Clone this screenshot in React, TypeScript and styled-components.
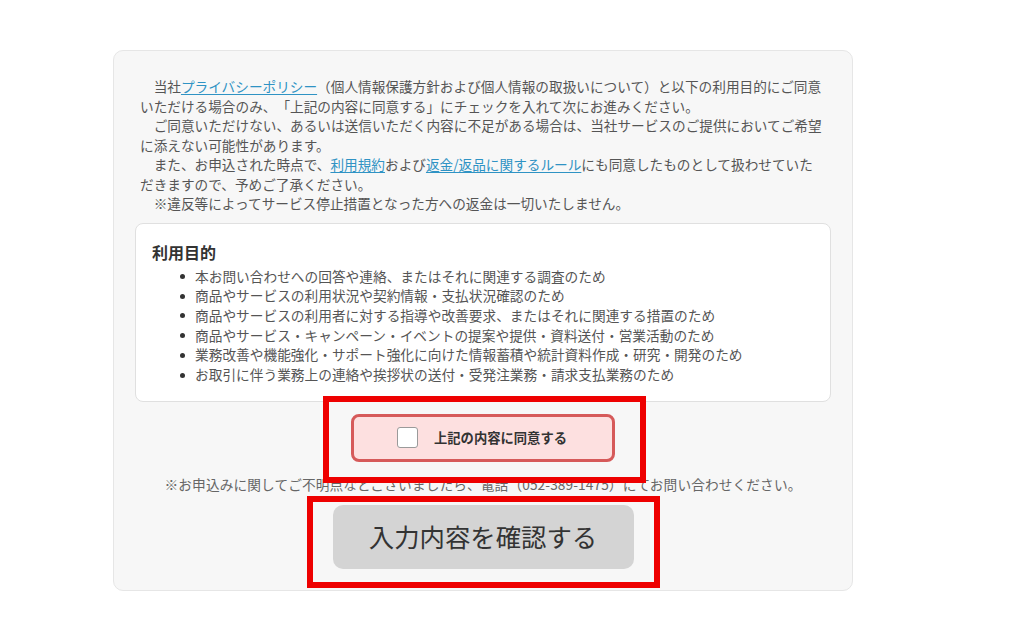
import React from "react";
import styled, { createGlobalStyle } from "styled-components";

const Global = createGlobalStyle`
  html, body { margin: 0; padding: 0; background: #ffffff; }
  body {
    font-family: "Noto Sans CJK JP", "Noto Sans", sans-serif;
    color: #555;
    text-spacing-trim: space-all;
  }
  * { box-sizing: border-box; }
`;

const Page = styled.div`
  padding: 50px 0 40px 113px;
`;

const Card = styled.section`
  width: 740px;
  background: #f7f7f7;
  border: 1px solid #e6e6e6;
  border-radius: 10px;
  padding: 26px 0 21px 0;
  display: flex;
  flex-direction: column;
  align-items: stretch;
`;

const Intro = styled.div`
  margin: 0 0 0 26px;
  width: 690px;
  font-size: 13.65px;
  line-height: 19.5px;
  color: #555;
  white-space: nowrap;
`;

const Line = styled.p`
  margin: 0;
`;

const Link = styled.a`
  color: #2f93c4;
  text-decoration: underline;
  text-underline-offset: 2px;
`;

const Purpose = styled.div`
  margin: 9px 21px 0 21px;
  background: #ffffff;
  border: 1px solid #e0e0e0;
  border-radius: 8px;
  padding: 16px 16px 16px 16px;
`;

const PurposeTitle = styled.h3`
  margin: 0 0 3px 0;
  font-size: 16px;
  line-height: 24px;
  font-weight: 700;
  color: #333;
`;

const List = styled.ul`
  list-style: none;
  margin: 0;
  padding: 0 0 0 43px;
`;

const Item = styled.li`
  position: relative;
  font-size: 13.7px;
  line-height: 19.7px;
  color: #555;
  &::before {
    content: "";
    position: absolute;
    left: -15px;
    top: 7.5px;
    width: 5px;
    height: 5px;
    border-radius: 50%;
    background: #333;
  }
`;

const Annotated = styled.div<{ $t: number; $r: number; $b: number; $l: number }>`
  position: relative;
  align-self: center;
  &::after {
    content: "";
    position: absolute;
    top: ${(p) => p.$t}px;
    right: ${(p) => p.$r}px;
    bottom: ${(p) => p.$b}px;
    left: ${(p) => p.$l}px;
    border: 6px solid #ee0000;
    pointer-events: none;
    z-index: 2;
  }
`;

const AgreeBox = styled.label`
  width: 264px;
  height: 48px;
  background: #fde0e0;
  border: 3px solid #d65a5a;
  border-radius: 8px;
  display: flex;
  align-items: center;
  justify-content: center;
  gap: 16px;
  cursor: pointer;
`;

const Check = styled.span`
  width: 21px;
  height: 21px;
  background: #fff;
  border: 1px solid #9a9a9a;
  border-radius: 3px;
  margin-left: -2px;
`;

const AgreeLabel = styled.span`
  font-size: 13.3px;
  font-weight: 700;
  color: #333;
`;

const Note = styled.p`
  margin: 12px 0 0 0;
  text-align: center;
  font-size: 13.7px;
  line-height: 20px;
  letter-spacing: 0.1px;
  color: #666;
  position: relative;
  z-index: 1;
`;

const Submit = styled.button`
  width: 301px;
  height: 64px;
  border: none;
  border-radius: 10px;
  background: #d4d4d4;
  color: #333;
  font-family: inherit;
  font-size: 25.4px;
  display: flex;
  align-items: center;
  justify-content: center;
  padding: 0 0 2px 0;
`;

const SubmitWrap = styled(Annotated)`
  margin-top: 11px;
`;

const AgreeWrap = styled(Annotated)`
  margin-top: 12px;
`;

const IND = "\u3000";

const purposes = [
  "本お問い合わせへの回答や連絡、またはそれに関連する調査のため",
  "商品やサービスの利用状況や契約情報・支払状況確認のため",
  "商品やサービスの利用者に対する指導や改善要求、またはそれに関連する措置のため",
  "商品やサービス・キャンペーン・イベントの提案や提供・資料送付・営業活動のため",
  "業務改善や機能強化・サポート強化に向けた情報蓄積や統計資料作成・研究・開発のため",
  "お取引に伴う業務上の連絡や挨拶状の送付・受発注業務・請求支払業務のため",
];

export default function App() {
  return (
    <>
      <Global />
      <Page>
        <Card>
          <Intro>
            <Line>
              {IND}当社<Link href="#">プライバシーポリシー</Link>
              {"（個人情報保護方針および個人情報の取扱いについて）と以下の利用目的にご同意"}
            </Line>
            <Line>{"いただける場合のみ、「上記の内容に同意する」にチェックを入れて次にお進みください。"}</Line>
            <Line>{IND + "ご同意いただけない、あるいは送信いただく内容に不足がある場合は、当社サービスのご提供においてご希望"}</Line>
            <Line>{"に添えない可能性があります。"}</Line>
            <Line>
              {IND + "また、お申込された時点で、"}
              <Link href="#">利用規約</Link>
              {"および"}
              <Link href="#">返金/返品に関するルール</Link>
              {"にも同意したものとして扱わせていた"}
            </Line>
            <Line>{"だきますので、予めご了承ください。"}</Line>
            <Line>{IND + "※違反等によってサービス停止措置となった方への返金は一切いたしません。"}</Line>
          </Intro>
          <Purpose>
            <PurposeTitle>利用目的</PurposeTitle>
            <List>
              {purposes.map((p) => (
                <Item key={p}>{p}</Item>
              ))}
            </List>
          </Purpose>
          <AgreeWrap $t={-18} $r={-31} $b={-21} $l={-28}>
            <AgreeBox>
              <Check />
              <AgreeLabel>上記の内容に同意する</AgreeLabel>
            </AgreeBox>
          </AgreeWrap>
          <Note>{"※お申込みに関してご不明点などございましたら、電話（052-389-1475）にてお問い合わせください。"}</Note>
          <SubmitWrap $t={-9} $r={-26} $b={-19} $l={-26}>
            <Submit type="button">入力内容を確認する</Submit>
          </SubmitWrap>
        </Card>
      </Page>
    </>
  );
}
